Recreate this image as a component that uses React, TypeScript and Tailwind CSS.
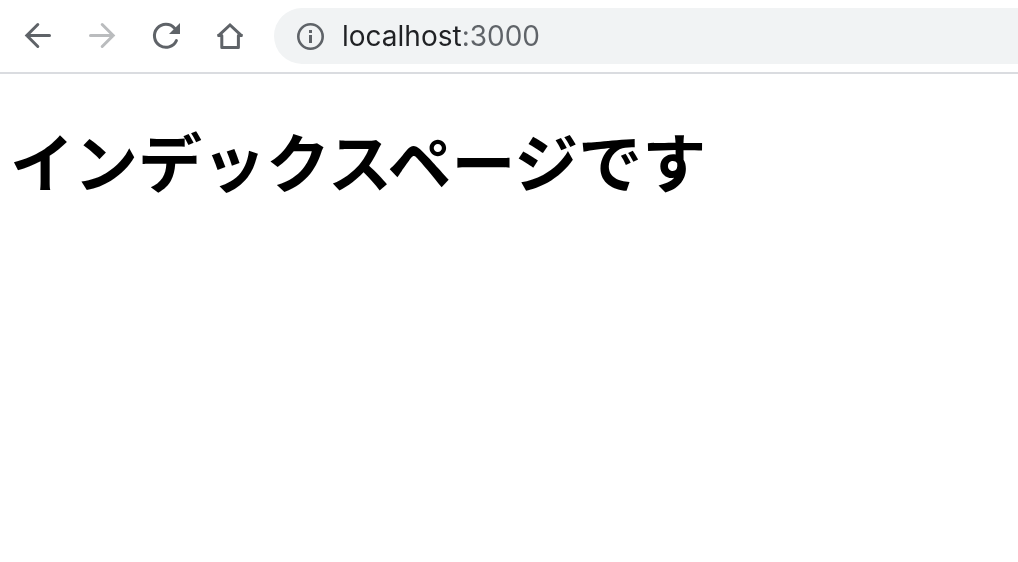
import { useState } from "react";
import type { ReactNode } from "react";

function NavButton({ label, disabled = false, children }: { label: string; disabled?: boolean; children: ReactNode }) {
  return (
    <button type="button" aria-label={label} disabled={disabled} className="flex size-10 shrink-0 items-center justify-center rounded-full text-[#5f6368] hover:bg-[#f1f3f4] disabled:text-[#babcbe]">
      <svg viewBox="0 0 32 32" fill="none" stroke="currentColor" strokeWidth="3" className="size-8" aria-hidden="true">
        {children}
      </svg>
    </button>
  );
}

export default function App() {
  const [url, setUrl] = useState("localhost:3000");

  return (
    <div className="min-h-screen bg-white font-['Inter','Noto_Sans_CJK_JP',sans-serif]">
      <header className="flex items-center gap-6 border-b-2 border-[#dadce0] py-2 pl-[18px]">
        <NavButton label="Back">
          <path d="M27.5 15.5H5M15.8 4.5L4.8 15.5L15.8 26.5" strokeLinecap="round" />
        </NavButton>
        <NavButton label="Forward" disabled>
          <path d="M4.5 15.5H27M16.2 4.5L27.2 15.5L16.2 26.5" strokeLinecap="round" />
        </NavButton>
        <NavButton label="Reload">
          <path d="M24.6 8.2A11.5 11.5 0 1 0 26.4 20.6" strokeLinecap="round" />
          <path d="M30 3V14H19Z" fill="currentColor" stroke="none" />
        </NavButton>
        <NavButton label="Home">
          <path d="M4 16.2L16 5L28 16.2" />
          <path d="M3.5 15.6H7.8V27.5H24.4V15.6H28.5" strokeLinejoin="round" />
        </NavButton>
        <div className="flex h-14 min-w-0 flex-1 items-center gap-4 rounded-l-full bg-[#f1f3f4] pl-5">
          <svg viewBox="0 0 32 32" className="size-8 shrink-0" aria-hidden="true">
            <circle cx="16.5" cy="16.5" r="12.2" fill="none" stroke="#5f6368" strokeWidth="2.6" />
            <path d="M15 10h3v3h-3zM15 15h3v8h-3z" fill="#5f6368" />
          </svg>
          {/* host is dark, port is grey */}
          <input type="text" aria-label="Address" value={url} onChange={(e) => setUrl(e.target.value)} className="min-w-0 flex-1 bg-[linear-gradient(90deg,#202124_120px,#5f6368_120px)] bg-clip-text text-[28px] leading-10 text-transparent caret-black outline-none" />
        </div>
      </header>
      <main className="px-2.5 py-[42px]">
        <h1 className="text-[64px] leading-24 font-bold text-black">インデックスページです</h1>
      </main>
    </div>
  );
}
